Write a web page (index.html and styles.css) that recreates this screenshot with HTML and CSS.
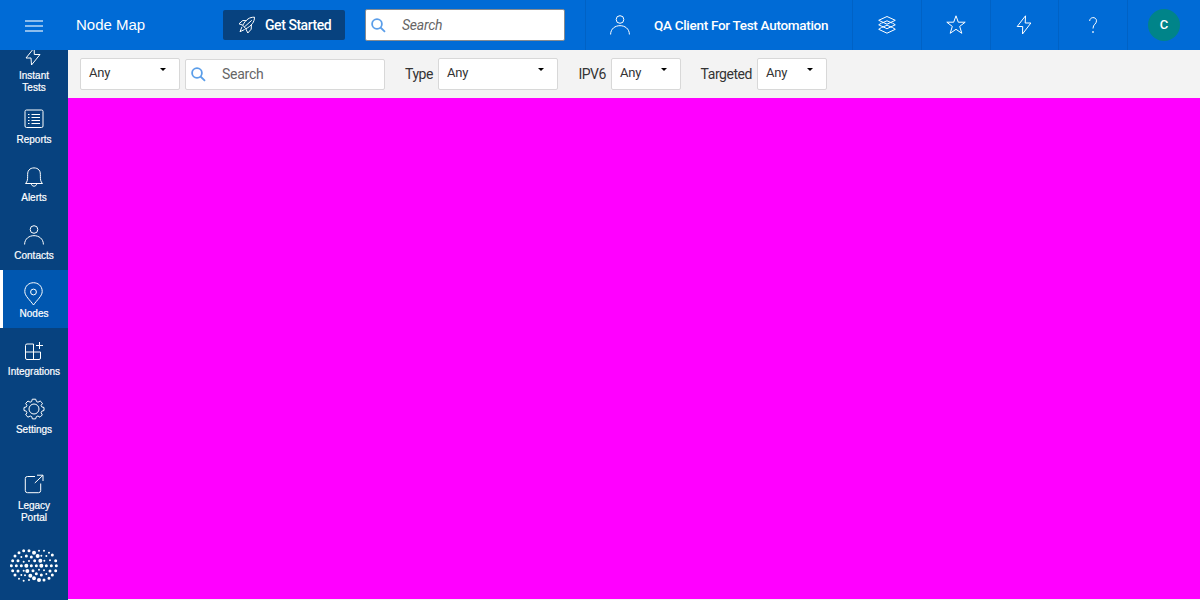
FILE: index.html
```html
<!DOCTYPE html>
<html lang="en">
<head>
<meta charset="utf-8">
<title>Node Map</title>
<link rel="stylesheet" href="styles.css">
</head>
<body>
<header class="topbar">
  <div class="menu"><i></i><i></i><i></i></div>
  <h1 class="title">Node Map</h1>
  <button class="start"><svg width="18" height="18" viewBox="0 0 18 18"><path d="M16.500 1.200 C11.500 1 8 3.500 4.800 9.200 L7.800 12.800 C13.500 9.800 16.500 6 16.500 1.200Z M8.500 4.700 L4.800 4.500 L1 7.800 L4.800 9.200 M13.400 8.800 L13.200 13.200 L9.800 17 L7.800 12.800 M13.800 4.300 L6.300 11 M4 10.800 L2 15.700 L6.600 13.500"/></svg><span>Get Started</span></button>
  <div class="search search-top"><svg class="lens" width="15" height="15" viewBox="0 0 15 15"><circle cx="6" cy="6" r="4.900"/><path d="M9.500 9.500 L14 13.800"/></svg><span>Search</span></div>
  <div class="client"><svg width="20" height="20" viewBox="0 0 20 20"><circle cx="10" cy="4.500" r="3.800"/><path d="M.6 19.500 C.6 7.700 19.400 7.700 19.400 19.500"/></svg><span>QA Client For Test Automation</span></div>
  <div class="cell"><svg width="20" height="20" viewBox="0 0 20 20"><path d="M10 1.500 L18.300 5.300 L10 9.200 L1.700 5.300Z M4.700 8 L1.700 9.800 L10 13.700 L18.300 9.800 L15.300 8 M4.700 12.400 L1.700 14.300 L10 18.200 L18.300 14.300 L15.300 12.400 M5 8 L10 5.800 L15 8 M5 12.400 L10 10.200 L15 12.400"/></svg></div>
  <div class="cell"><svg width="20" height="20" viewBox="0 0 20 20"><path d="M10 .8 L12.300 7.200 H19.200 L13.700 11.400 L15.800 18.300 L10 14.300 L4.200 18.300 L6.300 11.400 L.8 7.200 H7.700Z"/></svg></div>
  <div class="cell"><svg width="20" height="20" viewBox="0 0 20 20"><path d="M11.500 .8 L3.200 11.500 H8.700 L8.500 19 L16.900 8 H11.200Z"/></svg></div>
  <div class="cell"><svg width="20" height="20" viewBox="0 0 20 20"><path d="M6.700 6 C6.700 1.500 13.500 1.500 13.500 5.800 C13.500 9.300 10 9 10 13.500"/><path d="M9.200 17 H10.800" stroke-width="1.500"/></svg></div>
  <div class="cell last"><span class="avatar">C</span></div>
</header>
<div class="shell">
  <nav class="side">
    <a class="item instant"><svg width="20" height="20" viewBox="0 0 20 20"><path d="M11.200 .8 L3 11 H8 L8.500 18 L17 7.500 H11.300Z"/></svg><span>Instant<br>Tests</span></a>
    <a class="item"><svg width="20" height="20" viewBox="0 0 20 20"><rect x="1" y="1" width="18" height="17.500" rx="1.500"/><path d="M7.500 5.500 H16 M7.500 8.500 H16 M7.500 11.500 H16 M7.500 14.500 H16 M4 5.500 H5.500 M4 8.500 H5.500 M4 11.500 H5.500 M4 14.500 H5.500"/></svg><span>Reports</span></a>
    <a class="item"><svg width="20" height="20" viewBox="0 0 20 20"><path d="M1.500 16.500 C5.500 13 2 6 5 3 C7 .2 13 .2 15 3 C18 6 14.500 13 18.500 16.500Z M7.300 16.700 C7.500 20 12.500 20 12.700 16.700"/></svg><span>Alerts</span></a>
    <a class="item"><svg width="20" height="20" viewBox="0 0 20 20"><circle cx="10" cy="4.500" r="3.800"/><path d="M.6 19.500 C.6 7.700 19.400 7.700 19.400 19.500"/></svg><span>Contacts</span></a>
    <a class="item active"><svg class="pin" width="20" height="24" viewBox="0 0 20 24"><path d="M9.500 23 C6 18 .8 14 .8 9.500 C.8 -2.200 18.200 -2.200 18.200 9.500 C18.200 14 13 18 9.500 23Z"/><circle cx="9.500" cy="10" r="2.900"/></svg><span>Nodes</span></a>
    <a class="item"><svg width="20" height="20" viewBox="0 0 20 20"><path d="M9.500 3 H3 Q1.500 3 1.500 4.500 V17 Q1.500 18.500 3 18.500 H15 Q16.500 18.500 16.500 17 V11 H1.500 M9.500 3 V18.500 M15.500 1 V8 M12 4.500 H19"/></svg><span>Integrations</span></a>
    <a class="item settings"><svg width="22" height="22" viewBox="0 0 22 22"><path d="M9.300 1.200 H12.700 L13.500 3.600 L15 4.200 L17.200 3 L19.500 5.300 L18.100 7.500 L18.800 8.900 L21 9.500 V12.500 L18.800 13.200 L18.100 14.700 L19.300 16.900 L17 19.200 L14.900 18 L13.400 18.600 L12.600 20.900 H9.400 L8.700 18.600 L7.200 18 L5 19.200 L2.700 16.900 L3.900 14.700 L3.300 13.200 L1 12.500 V9.500 L3.300 8.900 L3.900 7.500 L2.700 5.300 L5 3 L7.100 4.200 L8.600 3.600Z"/><circle cx="11" cy="11" r="5"/></svg><span>Settings</span></a>
    <a class="item legacy"><svg width="20" height="20" viewBox="0 0 20 20"><path d="M11 2.500 H3.500 Q1.300 2.500 1.300 4.500 V16.500 Q1.300 18.700 3.500 18.700 H14.500 Q16.700 18.700 16.700 16.500 V9.500 M13 1.200 H19 V7 M19 1.200 L10.800 9"/></svg><span>Legacy<br>Portal</span></a>
    <svg class="brand" width="48" height="34" viewBox="0 0 144 102">
      <g stroke-width="9"><path d="M41 5h0M57 5h0M27 11h0M15 21h0M49 21h0M64 24h0M127 18h0M8 35h0M24 35h0M74 35h0M137 35h0M4 50h0M19 50h0M34 50h0M64 50h0M79 50h0M109 50h0M124 50h0M139 50h0M8 65h0M24 66h0M69 65h0M120 66h0M137 65h0M15 78h0M79 74h0M94 78h0M127 78h0M102 93h0M117 88h0"/></g>
      <g stroke-width="6"><path d="M87 5h0M102 5h0M117 11h0M34 24h0M94 20h0M109 21h0M41 38h0M57 36h0M103 35h0M120 34h0M41 65h0M87 62h0M102 64h0M34 78h0M45 79h0M109 75h0M27 89h0M41 95h0M57 93h0"/></g>
      <g stroke-width="12"><path d="M72 11h0M83 21h0M91 35h0M49 50h0M94 50h0M52 66h0M61 80h0M72 88h0M87 93h0"/></g>
    </svg>
  </nav>
  <main class="content">
    <form class="filters">
      <div class="select w100">Any<svg class="caret" width="6" height="3"><path d="M0 0H6L3 3Z"/></svg></div>
      <div class="search search-filter"><svg class="lens" width="15" height="15" viewBox="0 0 15 15"><circle cx="6" cy="6" r="4.900"/><path d="M9.500 9.500 L14 13.800"/></svg><span>Search</span></div>
      <label class="lab type">Type</label><div class="select w120">Any<svg class="caret" width="6" height="3"><path d="M0 0H6L3 3Z"/></svg></div>
      <label class="lab ip">IPV6</label><div class="select w70">Any<svg class="caret" width="6" height="3"><path d="M0 0H6L3 3Z"/></svg></div>
      <label class="lab target">Targeted</label><div class="select w70">Any<svg class="caret" width="6" height="3"><path d="M0 0H6L3 3Z"/></svg></div>
    </form>
    <div class="map"></div>
  </main>
</div>
</body>
</html>
```
FILE: styles.css
```css
* { box-sizing: border-box; }
body { margin: 0; width: 1200px; height: 600px; overflow: hidden; font-family: Roboto, sans-serif; background: #f3f3f3; }
svg { display: block; fill: none; stroke: #fff; stroke-width: 1; flex: none; }
.topbar { display: flex; align-items: center; height: 50px; background: #006bd6; color: #fff; }
.menu { width: 68px; display: flex; flex-direction: column; align-items: center; gap: 3px; padding-top: 2px; }
.menu i { width: 18px; height: 2px; background: #8cbded; }
.title { margin: 0; padding-left: 8px; width: 155px; font: 400 15px/20px "Liberation Sans", sans-serif; white-space: nowrap; }
.start { display: flex; align-items: center; width: 122px; height: 30px; border: 0; border-radius: 2px; padding: 0 0 0 15px; gap: 9px; background: #07427f; color: #fff; font: 500 14px/20px Roboto, sans-serif; letter-spacing: -.45px; white-space: nowrap; }
.search { display: flex; align-items: center; background: #fff; border: 1px solid #d8d8d8; border-radius: 2px; width: 200px; color: #666; font-size: 14px; letter-spacing: -.25px; }
.search span { padding-left: 16px; padding-bottom: 1px; }
.search .lens { margin-left: 5px; stroke: #5b9ee9; stroke-width: 1.800; }
.search-top { height: 32px; margin-left: 20px; border-color: #858b91; font-style: italic; }
.client { display: flex; align-items: center; align-self: stretch; width: 267px; margin-left: 20px; padding-left: 24px; border-left: 1px solid #0062c5; font: 500 13.500px/20px Roboto, sans-serif; letter-spacing: -.3px; white-space: nowrap; }
.client span { margin-left: 24px; }
.cell { display: flex; align-items: center; justify-content: center; align-self: stretch; width: 68.750px; border-left: 1px solid #0062c5; }
.cell.last { width: 73px; }
.avatar { width: 32px; height: 32px; border-radius: 50%; background: #008489; font: 500 13px/32px Roboto, sans-serif; text-align: center; }
.shell { display: flex; height: 550px; }
.side { width: 68px; background: #07427f; overflow: hidden; display: flex; flex-direction: column; align-items: center; }
.item { width: 68px; height: 58px; flex: none; display: flex; flex-direction: column; align-items: center; justify-content: flex-end; gap: 5px; padding-bottom: 8px; color: #fff; font: 10px/12px "Liberation Sans", sans-serif; -webkit-text-stroke: .2px #fff; text-align: center; }
.item.instant { height: 46px; padding-bottom: 2px; gap: 3px; }
.item.instant svg { margin-right: 2px; }
.item.active { background: #0057b0; border-left: 3px solid #fff; padding-right: 3px; }
.item.active .pin { margin-bottom: -3px; }
.item.settings { gap: 4px; }
.item.legacy { height: 88px; }
.item.legacy svg { margin-bottom: 1px; }
.brand { margin-top: 17px; stroke-linecap: round; }
.content { width: 1132px; }
.filters { height: 48px; display: flex; align-items: center; padding-left: 12px; margin: 0; color: #333; }
.select { height: 32px; display: flex; justify-content: space-between; background: #fff; border: 1px solid #d8d8d8; border-radius: 2px; padding: 5px 13px 0 8px; font: 13px/18px Roboto, sans-serif; letter-spacing: -.2px; }
.caret { margin-top: 4px; stroke: none; fill: #000; }
.w100 { width: 100px; }
.w120 { width: 120px; }
.w70 { width: 70px; }
.search-filter { height: 31px; margin-left: 5px; }
.lab { text-align: right; padding-right: 5px; padding-bottom: 1px; font-size: 14px; letter-spacing: -.45px; white-space: nowrap; }
.type { width: 53px; }
.ip { width: 53px; }
.target { width: 76px; }
.map { height: 501px; background: #f0f; }
```
